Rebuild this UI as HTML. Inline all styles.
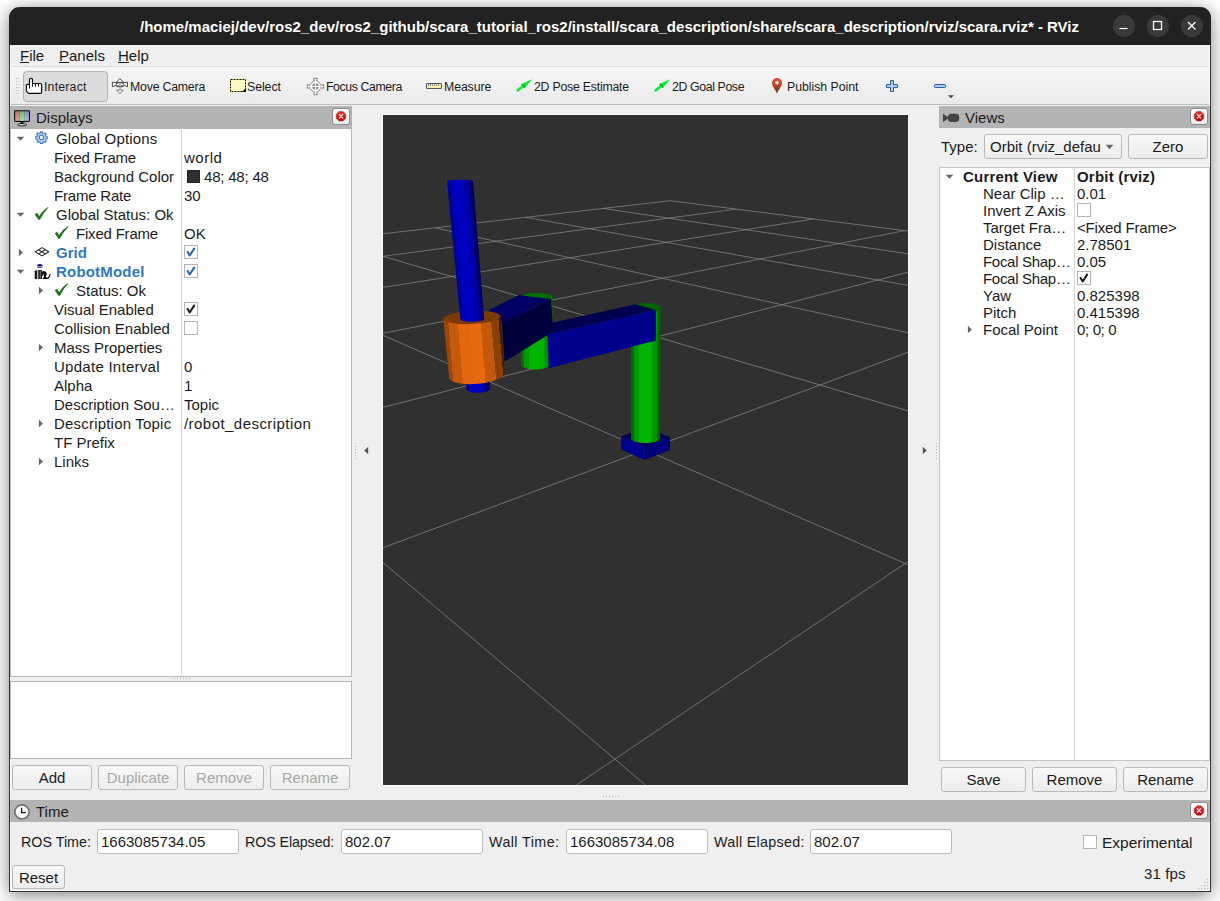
<!DOCTYPE html>
<html><head><meta charset="utf-8"><title>RViz</title>
<style>
html,body{margin:0;padding:0;}
body{width:1220px;height:901px;overflow:hidden;background:#ffffff;position:relative;font-family:"Liberation Sans",sans-serif;font-size:15px;color:#1b1b1b;}
.abs{position:absolute;}
#win{position:absolute;left:9px;top:7px;width:1200px;height:884px;border:1px solid #343434;border-top:none;border-radius:11px 11px 0 0;background:#efefef;box-shadow:0 3px 18px 0 rgba(0,0,0,.5);overflow:hidden;}
#page{position:absolute;left:0;top:0;width:1220px;height:901px;}
#titlebar{position:absolute;left:9px;top:7px;width:1202px;height:38px;background:#222222;border-radius:11px 11px 0 0;}
#title{position:absolute;left:-0.5px;top:7.5px;width:1220px;height:38px;line-height:38px;text-align:center;color:#fff;font-weight:bold;font-size:15px;white-space:pre;}
.wbtn{position:absolute;top:15px;width:21.6px;height:21.6px;border-radius:50%;background:#393939;}
.t{position:absolute;white-space:pre;line-height:19px;height:19px;}
.tb{position:absolute;white-space:pre;font-size:12.3px;line-height:20px;height:20px;top:77px;}
.b{font-weight:bold;}
.blue{color:#2f78c4;}
.hdr{position:absolute;height:22px;background:#b4b4b4;}
.btn{position:absolute;border:1px solid #b9b9b9;border-radius:3px;background:linear-gradient(#f8f8f8,#ececec);box-sizing:border-box;text-align:center;white-space:pre;}
.dis{color:#a8a8a8;}
.field{position:absolute;border:1px solid #bdbdbd;border-radius:3px;background:#fff;box-sizing:border-box;white-space:pre;}
.cb{position:absolute;width:14px;height:14px;box-sizing:border-box;border:1px solid #b5b5b5;background:#fff;}
.close{position:absolute;width:18px;height:17px;box-sizing:border-box;border:1px solid #8c8c8c;border-radius:3px;background:linear-gradient(#fff,#ececec);}
.v{position:absolute;white-space:pre;line-height:17px;height:17px;}
</style></head><body>
<div id="win"></div>
<div id="page">
<div id="titlebar"></div>
<div id="title">/home/maciej/dev/ros2_dev/ros2_github/scara_tutorial_ros2/install/scara_description/share/scara_description/rviz/scara.rviz* - RViz</div>
<div class="wbtn" style="left:1113.2px"></div><div class="wbtn" style="left:1147.2px"></div><div class="wbtn" style="left:1181.2px"></div>
<svg class="abs" style="left:1112.4px;top:14.2px" width="92" height="23" viewBox="0 0 92 23"><g stroke="#fff" stroke-width="1.3" fill="none"><path d="M7.5 14.5h8"/><rect x="41.5" y="7.5" width="8" height="8"/><path d="M76 8l7.5 7.5M83.5 8l-7.5 7.5"/></g></svg>

<!-- menubar -->
<div class="abs" style="left:10px;top:45px;width:1200px;height:21px;background:#efefef;border-bottom:1px solid #dcdcdc"></div>
<div class="t" style="left:20px;top:46px;font-size:15px"><u>F</u>ile</div>
<div class="t" style="left:59px;top:46px;font-size:15px"><u>P</u>anels</div>
<div class="t" style="left:118px;top:46px;font-size:15px"><u>H</u>elp</div>

<!-- toolbar -->
<div class="abs" style="left:10px;top:67px;width:1200px;height:37px;background:linear-gradient(#f5f5f5,#eaeaea);border-bottom:1px solid #bcbcbc"></div>
<svg class="abs" style="left:15px;top:77px" width="5" height="18"><rect x="1" y="1" width="1" height="1" fill="#bdbdbd"/><rect x="1" y="4" width="1" height="1" fill="#bdbdbd"/><rect x="1" y="7" width="1" height="1" fill="#bdbdbd"/><rect x="1" y="10" width="1" height="1" fill="#bdbdbd"/><rect x="1" y="13" width="1" height="1" fill="#bdbdbd"/><rect x="1" y="16" width="1" height="1" fill="#bdbdbd"/><rect x="3" y="1" width="1" height="1" fill="#bdbdbd"/><rect x="3" y="4" width="1" height="1" fill="#bdbdbd"/><rect x="3" y="7" width="1" height="1" fill="#bdbdbd"/><rect x="3" y="10" width="1" height="1" fill="#bdbdbd"/><rect x="3" y="13" width="1" height="1" fill="#bdbdbd"/><rect x="3" y="16" width="1" height="1" fill="#bdbdbd"/></svg>
<div class="abs" style="left:23px;top:71px;width:85px;height:31px;box-sizing:border-box;border:1px solid #b4b4b4;border-radius:4px;background:#dcdcdc"></div>
<div class="tb" style="left:44px;letter-spacing:0.2px">Interact</div>
<div class="tb" style="left:130px;letter-spacing:-0.2px">Move Camera</div>
<div class="tb" style="left:247px;letter-spacing:-0.05px">Select</div>
<div class="tb" style="left:326px;letter-spacing:-0.4px">Focus Camera</div>
<div class="tb" style="left:444px;letter-spacing:-0.1px">Measure</div>
<div class="tb" style="left:534px;letter-spacing:-0.22px">2D Pose Estimate</div>
<div class="tb" style="left:672px;letter-spacing:-0.37px">2D Goal Pose</div>
<div class="tb" style="left:787px;letter-spacing:-0.02px">Publish Point</div>
<svg class="abs" style="left:0;top:66px" width="1220" height="40" viewBox="0 66 1220 40">
<defs>
<linearGradient id="pin" x1="0" x2="0" y1="0" y2="1"><stop offset="0" stop-color="#ea4630"/><stop offset=".35" stop-color="#d64428"/><stop offset="1" stop-color="#5a3a06"/></linearGradient>
<linearGradient id="plusg" x1="0" x2="0" y1="0" y2="1"><stop offset="0" stop-color="#9dbbe2"/><stop offset="1" stop-color="#c3d6ee"/></linearGradient>
</defs>
<!-- hand -->
<path d="M26.4 85.6Q26.4 84.4 27.6 84.4H29.500V79.300Q29.500 78.300 31 78.300Q32.500 78.300 32.500 79.300V83.500H40.400Q41.600 83.500 41.600 84.800V92.200Q41.600 93.400 40.400 93.400H28.600L26.400 91.300Z" fill="#fff" stroke="#0a0a0a" stroke-width="1.15" stroke-linejoin="round"/>
<path d="M29.500 84.400V88.400M32.500 83.500V86.600M35.500 83.600V86.600M38.500 83.600V86.600" stroke="#0a0a0a" stroke-width="1" fill="none"/>
<!-- move camera -->
<g transform="translate(112,78)" stroke-linejoin="round" stroke-width="1">
<path d="M7.900 .700L11.800 4.400H4Z" fill="#fff" stroke="#4a4a4a"/>
<path d="M.400 4.100V8.800L3.200 7.500Q7.900 10.600 12.700 7.500L15.500 8.800V4.100L12 4.700H3.900Z" fill="#fff" stroke="#4a4a4a"/>
<rect x="7.100" y="4.600" width="1.600" height="8" fill="#b8b8b8"/>
<ellipse cx="7.900" cy="6.400" rx="4" ry="1.900" fill="none" stroke="#4a4a4a"/>
<path d="M4.500 12H11.300L7.900 15.700Z" fill="#fff" stroke="#7a7a7a"/>
</g>
<!-- select -->
<rect x="230.5" y="79.5" width="15" height="12" fill="#fdf7c3" stroke="#fffb8a" stroke-width="1.6"/>
<rect x="230.5" y="79.5" width="15" height="12" fill="none" stroke="#111" stroke-width="1" stroke-dasharray="2 1"/>
<path d="M246 88v4h-4z" fill="#000"/>
<!-- focus -->
<g transform="translate(315.5,86.5)" stroke="#777" stroke-width="1" fill="#fff">
<rect x="-1.5" y="-8.2" width="3" height="16.4"/><rect x="-8.2" y="-1.5" width="16.4" height="3"/>
<circle r="5.4"/>
<path d="M-1.5 -5.2V-1M1.5 -5.2V-1M-1.5 5.2V1M1.5 5.2V1M-5.2 -1.5H-1M-5.2 1.5H-1M5.2 -1.5H1M5.2 1.5H1" stroke="#fff" stroke-width="1.4"/>
<circle r="3.3" fill="#8a8a8a" stroke="none"/>
<path d="M0 -8V8M-8 0H8" stroke="#fff" stroke-width="1.1"/>
</g>
<!-- measure -->
<rect x="426.5" y="83.5" width="15" height="5" rx="1" fill="#f6eeb4" stroke="#555" stroke-width="1.1"/>
<path d="M428.5 84v2M430.5 84v2M432.5 84v2M434.5 84v2M436.5 84v2M438.5 84v2" stroke="#777" stroke-width=".8"/>
<!-- arrows -->
<g id="garrow" transform="translate(516.7,91.1) rotate(-38)">
<rect x="0" y="-1.3" width="9.2" height="2.6" fill="#00ee2c" rx="1"/>
<path d="M8.2 -2.6L19.4 0L8.2 2.6Z" fill="#00ee2c"/>
<path d="M8.2 -2.6q1.2 2.6 0 5.2" stroke="#00a022" stroke-width="1.2" fill="none"/>
</g>
<g transform="translate(654.7,91.1) rotate(-38)">
<rect x="0" y="-1.3" width="9.2" height="2.6" fill="#00ee2c" rx="1"/>
<path d="M8.2 -2.6L19.4 0L8.2 2.6Z" fill="#00ee2c"/>
<path d="M8.2 -2.6q1.2 2.6 0 5.2" stroke="#00a022" stroke-width="1.2" fill="none"/>
</g>
<!-- pin -->
<path d="M777 93.6 C775 88.6 772 86.2 772 83 a5 5 0 0 1 10 0 C782 86.2 779 88.6 777 93.6Z" fill="url(#pin)"/>
<circle cx="777" cy="82.7" r="1.8" fill="#fff"/>
<!-- plus minus -->
<path d="M890.5 80.5h3v4h4v3h-4v4h-3v-4h-4v-3h4z" fill="url(#plusg)" stroke="#2b5fa8" stroke-width="1" stroke-linejoin="round"/>
<rect x="934.5" y="84.5" width="11" height="3" rx=".8" fill="url(#plusg)" stroke="#2b5fa8" stroke-width="1"/>
<path d="M948 95.2h6l-3 3z" fill="#444"/>
</svg>


<div class="abs" style="left:10px;top:45px;width:1px;height:846px;background:#fbfbfb"></div><div class="abs" style="left:1209px;top:45px;width:1px;height:846px;background:#fbfbfb"></div><div class="abs" style="left:10px;top:890px;width:1200px;height:1px;background:#fbfbfb"></div>
<!-- displays panel -->
<div class="hdr" style="left:10px;top:106px;width:342px;height:22.6px"></div>
<div class="t" style="left:36px;top:108px">Displays</div>
<div class="abs" style="left:10px;top:128.6px;width:342px;height:548.4px;box-sizing:border-box;background:#fff;border:1px solid #b9b9b9;border-top:none"></div>
<div class="abs" style="left:181px;top:128px;width:1px;height:548px;background:#d6d6d6"></div>
<svg class="abs" style="left:16.4px;top:135.6px" width="9" height="6"><path d="M0.7 0.8h7.6l-3.8 4z" fill="#666"/></svg>
<svg class="abs" style="left:34px;top:130px" width="17" height="17" viewBox="0 0 17 17">
<g transform="translate(7.5,7.5) scale(.88)">
<g fill="#b9cdea" stroke="#3b78c8" stroke-width="1.15" stroke-linejoin="round">
<path d="M-1.1 -6.5h2.2l.3 1.6 1.2.5 1.4-.9 1.5 1.5-.9 1.4.5 1.2 1.6.3v2.2l-1.6.3-.5 1.2.9 1.4-1.5 1.5-1.4-.9-1.2.5-.3 1.6h-2.2l-.3-1.6-1.2-.5-1.4.9-1.5-1.5.9-1.4-.5-1.2-1.6-.3v-2.2l1.6-.3.5-1.2-.9-1.4 1.5-1.5 1.4.9 1.2-.5z"/>
<circle r="2.6" fill="#dbe6f5"/>
</g><circle r="1.2" fill="#fff"/></g>
</svg>
<div class="t" style="left:56px;top:129px;letter-spacing:0.15px">Global Options</div>

<div class="t" style="left:54px;top:148px;letter-spacing:-0.2px">Fixed Frame</div>
<div class="t" style="left:184px;top:148px;letter-spacing:0.5px">world</div>

<div class="t" style="left:54px;top:167px">Background Color</div>
<div class="abs" style="left:187px;top:170px;width:13px;height:13px;background:#303030;box-sizing:border-box;border:1px solid #222"></div>
<div class="t" style="left:204px;top:167px;letter-spacing:-.2px">48; 48; 48</div>

<div class="t" style="left:54px;top:186px;letter-spacing:-0.2px">Frame Rate</div>
<div class="t" style="left:184px;top:186px">30</div>
<svg class="abs" style="left:16.4px;top:211.6px" width="9" height="6"><path d="M0.7 0.8h7.6l-3.8 4z" fill="#666"/></svg>
<svg class="abs" style="left:34px;top:206.4px" width="15.6" height="15" viewBox="0 0 17 16" preserveAspectRatio="none"><path d="M0.8 8.8L3.200 7.200L5.600 10.600Q9 4.800 15.200 1L15.700 1.700Q10.400 7.200 6.400 14.600L4.800 14.600Z" fill="#1d741d"/></svg>
<div class="t" style="left:56px;top:205px">Global Status: Ok</div>

<svg class="abs" style="left:54px;top:225.4px" width="15.6" height="15" viewBox="0 0 17 16" preserveAspectRatio="none"><path d="M0.8 8.8L3.200 7.200L5.600 10.600Q9 4.800 15.200 1L15.700 1.700Q10.400 7.200 6.400 14.600L4.800 14.600Z" fill="#1d741d"/></svg>
<div class="t" style="left:76px;top:224px;letter-spacing:-0.2px">Fixed Frame</div>
<div class="t" style="left:184px;top:224px">OK</div>
<svg class="abs" style="left:18px;top:248px" width="6" height="9"><path d="M0.9 0.7v7.6l4-3.8z" fill="#666"/></svg>
<svg class="abs" style="left:34px;top:244px" width="17" height="17" viewBox="0 0 17 17">
<g fill="none" stroke="#2a2a2a" stroke-width="1.1" stroke-linejoin="round">
<path d="M1.200 7.800L8 3.600L14.800 7.800L8 11.900Z"/><path d="M4.600 5.700L11.400 9.850M11.400 5.700L4.600 9.850"/>
</g>
</svg>
<div class="t b blue" style="left:56px;top:243px">Grid</div>
<div class="cb" style="left:184px;top:245px"></div><svg class="abs" style="left:184px;top:245px" width="14" height="14" viewBox="0 0 14 14"><path d="M3.200 6.200L5.700 10.500L10.600 2.900" fill="none" stroke="#2466b4" stroke-width="2" stroke-linejoin="round"/></svg>
<svg class="abs" style="left:16.4px;top:268.6px" width="9" height="6"><path d="M0.7 0.8h7.6l-3.8 4z" fill="#666"/></svg>
<svg class="abs" style="left:34px;top:263px" width="17" height="17" viewBox="0 0 17 17">
<g>
<ellipse cx="5.800" cy="3.100" rx="2.900" ry="2" fill="#10108c"/>
<path d="M3 2.800q2.800 1.200 5.700 0v1q-2.900 1.100-5.700 0z" fill="#eadba6"/>
<path d="M.8 8.300q.6-1.300 2.100-.8v8.400q-1.100.6-2.200-.2z" fill="#0c0c0c"/>
<path d="M3.700 7h4.200v1.300l1.500.6v3.300l-1.400 1v2.700H3.700z" fill="#1c1c1c"/>
<path d="M4.800 7.600v8M6.500 8v7.500" stroke="#9a9a9a" stroke-width=".6"/>
<path d="M8.700 8.300q3.600-.9 4.100 2.500q.2 1.600-1.100 2.700q.5 1.300 2 1.100q1.300-.6 2-3.900l1 .3q-.8 4.600-3.200 5.100h-5.200q2.300-1.700 1.500-4.500q-.4-1.700-1.600-1.400z" fill="#0c0c0c"/>
</g>
</svg>
<div class="t b blue" style="left:56px;top:262px;letter-spacing:0.2px">RobotModel</div>
<div class="cb" style="left:184px;top:264px"></div><svg class="abs" style="left:184px;top:264px" width="14" height="14" viewBox="0 0 14 14"><path d="M3.200 6.200L5.700 10.500L10.600 2.900" fill="none" stroke="#2466b4" stroke-width="2" stroke-linejoin="round"/></svg>
<svg class="abs" style="left:38px;top:286px" width="6" height="9"><path d="M0.9 0.7v7.6l4-3.8z" fill="#666"/></svg>
<svg class="abs" style="left:54px;top:282.4px" width="15.6" height="15" viewBox="0 0 17 16" preserveAspectRatio="none"><path d="M0.8 8.8L3.200 7.200L5.600 10.600Q9 4.800 15.200 1L15.700 1.700Q10.400 7.200 6.400 14.600L4.800 14.600Z" fill="#1d741d"/></svg>
<div class="t" style="left:76px;top:281px">Status: Ok</div>

<div class="t" style="left:54px;top:300px">Visual Enabled</div>
<div class="cb" style="left:184px;top:302px"></div><svg class="abs" style="left:184px;top:302px" width="14" height="14" viewBox="0 0 14 14"><path d="M3.200 6.200L5.700 10.500L10.600 2.900" fill="none" stroke="#1a1a1a" stroke-width="2" stroke-linejoin="round"/></svg>

<div class="t" style="left:54px;top:319px">Collision Enabled</div>
<div class="cb" style="left:184px;top:321px"></div>
<svg class="abs" style="left:38px;top:343px" width="6" height="9"><path d="M0.9 0.7v7.6l4-3.8z" fill="#666"/></svg>
<div class="t" style="left:54px;top:338px">Mass Properties</div>

<div class="t" style="left:54px;top:357px;letter-spacing:0.27px">Update Interval</div>
<div class="t" style="left:184px;top:357px">0</div>

<div class="t" style="left:54px;top:376px">Alpha</div>
<div class="t" style="left:184px;top:376px">1</div>

<div class="t" style="left:54px;top:395px">Description Sou…</div>
<div class="t" style="left:184px;top:395px">Topic</div>
<svg class="abs" style="left:38px;top:419px" width="6" height="9"><path d="M0.9 0.7v7.6l4-3.8z" fill="#666"/></svg>
<div class="t" style="left:54px;top:414px;letter-spacing:0.2px">Description Topic</div>
<div class="t" style="left:184px;top:414px;letter-spacing:0.45px">/robot_description</div>

<div class="t" style="left:54px;top:433px">TF Prefix</div>
<svg class="abs" style="left:38px;top:457px" width="6" height="9"><path d="M0.9 0.7v7.6l4-3.8z" fill="#666"/></svg>
<div class="t" style="left:54px;top:452px">Links</div>
<div class="abs" style="left:174px;top:678px;width:17px;height:1px;background-image:linear-gradient(90deg,#b0b0b0 1px,transparent 1px);background-size:3px 1px"></div>
<div class="abs" style="left:10px;top:681px;width:342px;height:78px;box-sizing:border-box;background:#fff;border:1px solid #b9b9b9"></div>
<div class="btn" style="left:12px;top:765px;width:80px;height:25px;line-height:23px">Add</div>
<div class="btn dis" style="left:98px;top:765px;width:80px;height:25px;line-height:23px">Duplicate</div>
<div class="btn dis" style="left:184px;top:765px;width:80px;height:25px;line-height:23px">Remove</div>
<div class="btn dis" style="left:270px;top:765px;width:80px;height:25px;line-height:23px">Rename</div>
<div class="close" style="left:332px;top:108px"></div>

<!-- viewport -->
<div class="abs" style="left:382px;top:114px;width:527px;height:672px;background:#fdfdfd"></div>
<svg class="abs" style="left:383px;top:115px" width="525" height="670" viewBox="0 0 525 670">
<rect width="525" height="670" fill="#303030"/>
<g stroke="#888" stroke-width="0.85" fill="none" stroke-opacity=".85">
<path d="M287.2 85.7L545.0 118.6"/>
<path d="M287.2 85.7L-20.0 121.1"/>
<path d="M220.1 93.4L545.0 141.8"/>
<path d="M353.1 94.1L-20.0 144.0"/>
<path d="M142.6 102.3L545.0 174.0"/>
<path d="M430.2 104.0L-20.0 175.6"/>
<path d="M52.1 112.8L545.0 222.2"/>
<path d="M521.7 115.6L-20.0 222.2"/>
<path d="M-20.0 135.4L545.0 301.8"/>
<path d="M545.0 152.1L-20.0 297.5"/>
<path d="M-20.0 211.5L545.0 458.5"/>
<path d="M545.0 229.8L-20.0 440.2"/>
<path d="M-20.0 430.6L286.0 690.0"/>
<path d="M545.0 433.1L163.7 690.0"/>
</g>
<defs>
<linearGradient id="gpost" x1="0" x2="1" y1="0" y2="0">
<stop offset="0" stop-color="#006e00"/><stop offset=".1" stop-color="#006e00"/><stop offset=".1" stop-color="#009600"/><stop offset=".28" stop-color="#009600"/><stop offset=".28" stop-color="#00b400"/><stop offset=".7" stop-color="#00b400"/><stop offset=".7" stop-color="#009600"/><stop offset=".88" stop-color="#009600"/><stop offset=".88" stop-color="#006e00"/><stop offset="1" stop-color="#006400"/>
</linearGradient>
<linearGradient id="gjoint" x1="0" x2="1" y1="0" y2="0">
<stop offset="0" stop-color="#007800"/><stop offset=".08" stop-color="#007800"/><stop offset=".08" stop-color="#009a00"/><stop offset=".25" stop-color="#009a00"/><stop offset=".25" stop-color="#00b400"/><stop offset=".72" stop-color="#00b400"/><stop offset=".72" stop-color="#009600"/><stop offset=".9" stop-color="#009600"/><stop offset=".9" stop-color="#006400"/><stop offset="1" stop-color="#005a00"/>
</linearGradient>
<linearGradient id="grod" gradientUnits="userSpaceOnUse" x1="447" y1="181.5" x2="472.8" y2="179.2">
<stop offset="0" stop-color="#000096"/><stop offset=".1" stop-color="#000096"/><stop offset=".1" stop-color="#0000b0"/><stop offset=".25" stop-color="#0000b0"/><stop offset=".25" stop-color="#0000c0"/><stop offset=".62" stop-color="#0000c0"/><stop offset=".62" stop-color="#0000a8"/><stop offset=".8" stop-color="#0000a8"/><stop offset=".8" stop-color="#000078"/><stop offset=".93" stop-color="#000078"/><stop offset=".93" stop-color="#000050"/><stop offset="1" stop-color="#000050"/>
</linearGradient>
<linearGradient id="gor" gradientUnits="userSpaceOnUse" x1="443.3" y1="318.5" x2="500.6" y2="313.7">
<stop offset="0" stop-color="#9a480a"/><stop offset=".08" stop-color="#9a480a"/><stop offset=".08" stop-color="#c65a0c"/><stop offset=".245" stop-color="#c65a0c"/><stop offset=".245" stop-color="#e36710"/><stop offset=".44" stop-color="#e36710"/><stop offset=".44" stop-color="#e8690f"/><stop offset=".64" stop-color="#e8690f"/><stop offset=".64" stop-color="#c4580c"/><stop offset=".825" stop-color="#c4580c"/><stop offset=".825" stop-color="#8a3e08"/><stop offset=".955" stop-color="#8a3e08"/><stop offset=".955" stop-color="#4a2104"/><stop offset="1" stop-color="#3a1a03"/>
</linearGradient>
<linearGradient id="grod2" gradientUnits="userSpaceOnUse" x1="466" y1="385" x2="490" y2="383.5">
<stop offset="0" stop-color="#000096"/><stop offset=".1" stop-color="#000096"/><stop offset=".1" stop-color="#0000b0"/><stop offset=".25" stop-color="#0000b0"/><stop offset=".25" stop-color="#0000c0"/><stop offset=".62" stop-color="#0000c0"/><stop offset=".62" stop-color="#0000a8"/><stop offset=".8" stop-color="#0000a8"/><stop offset=".8" stop-color="#000078"/><stop offset=".93" stop-color="#000078"/><stop offset=".93" stop-color="#000050"/><stop offset="1" stop-color="#000050"/>
</linearGradient>
</defs>
<g transform="translate(-383,-115)" shape-rendering="geometricPrecision">
<!-- base box -->
<polygon points="621,436.5 646.5,427.5 670,437.2 644.5,446" fill="#000050"/>
<polygon points="621,436.5 644.5,446 644.5,460 621,449.5" fill="#00008c"/>
<polygon points="644.5,446 670,437.2 670,450 644.5,460" fill="#000078"/>
<!-- post -->
<path d="M631 308 L631 438.5 A14.5 4.5 0 0 0 660 438.5 L660.6 308 Z" fill="url(#gpost)"/>
<ellipse cx="645.8" cy="308" rx="14.8" ry="5" fill="#006400"/>
<!-- joint cylinder -->
<path d="M521 297 L521.4 365 A13.8 4.6 0 0 0 549 365 L552.6 365 L552.6 297 Z" fill="url(#gjoint)"/>
<ellipse cx="536.8" cy="297.4" rx="15.8" ry="4.6" fill="#006e00"/>
<!-- arm 1 -->
<polygon points="553.3,322.4 635.2,304.2 655.9,310 547.3,334.4" fill="#00004e"/>
<polygon points="547.3,334.4 655.9,310 655.9,340.6 548.7,368.2" fill="#00008c"/>
<!-- arm 2 -->
<polygon points="488.6,310 518.6,295.3 550.9,298.9 502,323.3" fill="#000064"/>
<polygon points="502,323.3 550.9,298.9 553.2,331.7 504.6,361.5" fill="#00003c"/>
<!-- rod lower -->
<path d="M466 375 L466.3 389.5 A11.9 3.8 0 0 0 490 389 L490 375 Z" fill="url(#grod2)"/>
<!-- orange cylinder -->
<path d="M443.3 318.5 L449.3 378.5 A27.9 8.8 -5 0 0 504.6 373.2 L500.6 316 Z" fill="url(#gor)"/>
<ellipse cx="472" cy="317.5" rx="28.7" ry="6.6" transform="rotate(-2.5 472 317.5)" fill="#7e3a06"/>
<!-- rod upper -->
<path d="M447 181.5 A13 1.6 0 0 1 473 181 L484.2 319 A12 2.6 0 0 1 460.4 319.6 Z" fill="url(#grod)"/>
</g>

</svg>
<svg class="abs" style="left:363px;top:445.5px" width="6" height="9"><path d="M5.2 0.8v7.4l-4-3.7z" fill="#555"/></svg>
<svg class="abs" style="left:922.2px;top:445.5px" width="6" height="9"><path d="M0.8 0.8v7.4l4-3.7z" fill="#555"/></svg>
<div class="abs" style="left:603px;top:796px;width:17px;height:1px;background-image:linear-gradient(90deg,#b0b0b0 1px,transparent 1px);background-size:3px 1px"></div>
<svg class="abs" style="left:355px;top:443px" width="1" height="17"><rect x="0" y="0" width="1" height="1" fill="#b4b4b4"/><rect x="0" y="3" width="1" height="1" fill="#b4b4b4"/><rect x="0" y="6" width="1" height="1" fill="#b4b4b4"/><rect x="0" y="9" width="1" height="1" fill="#b4b4b4"/><rect x="0" y="12" width="1" height="1" fill="#b4b4b4"/><rect x="0" y="15" width="1" height="1" fill="#b4b4b4"/></svg>
<svg class="abs" style="left:936px;top:443px" width="1" height="17"><rect x="0" y="0" width="1" height="1" fill="#b4b4b4"/><rect x="0" y="3" width="1" height="1" fill="#b4b4b4"/><rect x="0" y="6" width="1" height="1" fill="#b4b4b4"/><rect x="0" y="9" width="1" height="1" fill="#b4b4b4"/><rect x="0" y="12" width="1" height="1" fill="#b4b4b4"/><rect x="0" y="15" width="1" height="1" fill="#b4b4b4"/></svg>

<!-- views panel -->
<div class="hdr" style="left:939px;top:106px;width:271px;height:22px"></div>
<div class="t" style="left:965px;top:108px">Views</div>
<div class="t" style="left:941px;top:137px">Type:</div>
<div class="btn" style="left:984px;top:134px;width:138px;height:25px;line-height:23px;text-align:left;overflow:hidden"><span style="position:absolute;left:5px;top:0;width:111px;overflow:hidden;display:block">Orbit (rviz_default_plugins)</span></div>
<svg class="abs" style="left:1105px;top:144px" width="9" height="6"><path d="M0.5 0.8h8l-4 4.4z" fill="#6a6a6a"/></svg>
<div class="btn" style="left:1128px;top:134px;width:80px;height:25px;line-height:23px">Zero</div>
<div class="abs" style="left:939px;top:167px;width:271px;height:594px;box-sizing:border-box;background:#fff;border:1px solid #c4c4c4"></div>
<div class="abs" style="left:1074px;top:168px;width:1px;height:592px;background:#d6d6d6"></div>
<svg class="abs" style="left:945.4px;top:173.6px" width="9" height="6"><path d="M0.7 0.8h7.6l-3.8 4z" fill="#666"/></svg>
<div class="v b" style="left:963px;top:168px;letter-spacing:0.2px">Current View</div>
<div class="v b" style="left:1077px;top:168px;letter-spacing:0.2px">Orbit (rviz)</div>

<div class="v" style="left:983px;top:185px">Near Clip …</div>
<div class="v" style="left:1077px;top:185px">0.01</div>

<div class="v" style="left:983px;top:202px">Invert Z Axis</div>
<div class="cb" style="left:1077px;top:203px"></div>

<div class="v" style="left:983px;top:219px">Target Fra…</div>
<div class="v" style="left:1077px;top:219px;letter-spacing:-0.17px">&lt;Fixed Frame&gt;</div>

<div class="v" style="left:983px;top:236px">Distance</div>
<div class="v" style="left:1077px;top:236px">2.78501</div>

<div class="v" style="left:983px;top:253px;letter-spacing:-0.3px">Focal Shap…</div>
<div class="v" style="left:1077px;top:253px">0.05</div>

<div class="v" style="left:983px;top:270px;letter-spacing:-0.3px">Focal Shap…</div>
<div class="cb" style="left:1077px;top:271px"></div><svg class="abs" style="left:1077px;top:271px" width="14" height="14" viewBox="0 0 14 14"><path d="M3.200 6.200L5.700 10.500L10.600 2.900" fill="none" stroke="#1a1a1a" stroke-width="2" stroke-linejoin="round"/></svg>

<div class="v" style="left:983px;top:287px">Yaw</div>
<div class="v" style="left:1077px;top:287px">0.825398</div>

<div class="v" style="left:983px;top:304px">Pitch</div>
<div class="v" style="left:1077px;top:304px">0.415398</div>
<svg class="abs" style="left:967px;top:325px" width="6" height="9"><path d="M0.9 0.7v7.6l4-3.8z" fill="#666"/></svg>
<div class="v" style="left:983px;top:321px">Focal Point</div>
<div class="v" style="left:1077px;top:321px;letter-spacing:-0.35px">0; 0; 0</div>
<div class="btn" style="left:941px;top:767px;width:85px;height:25px;line-height:23px">Save</div>
<div class="btn" style="left:1032px;top:767px;width:85px;height:25px;line-height:23px">Remove</div>
<div class="btn" style="left:1123px;top:767px;width:85px;height:25px;line-height:23px">Rename</div>
<div class="close" style="left:1190px;top:108px"></div>

<!-- time panel -->
<div class="hdr" style="left:10px;top:800px;width:1200px;height:21.5px"></div>
<div class="t" style="left:36px;top:801.5px">Time</div>
<div class="t" style="left:21px;top:833px;font-size:14.3px;letter-spacing:0px">ROS Time:</div>
<div class="t" style="left:245px;top:833px;font-size:14.3px;letter-spacing:-0.12px">ROS Elapsed:</div>
<div class="t" style="left:489px;top:833px;font-size:14.3px;letter-spacing:0.42px">Wall Time:</div>
<div class="t" style="left:714px;top:833px;font-size:14.3px;letter-spacing:0.3px">Wall Elapsed:</div>
<div class="field" style="left:97px;top:829px;width:142px;height:25px;line-height:23px;padding-left:3px">1663085734.05</div>
<div class="field" style="left:341px;top:829px;width:142px;height:25px;line-height:23px;padding-left:3px">802.07</div>
<div class="field" style="left:566px;top:829px;width:142px;height:25px;line-height:23px;padding-left:3px">1663085734.08</div>
<div class="field" style="left:810px;top:829px;width:142px;height:25px;line-height:23px;padding-left:3px">802.07</div>
<div class="btn" style="left:12px;top:865px;width:53px;height:24px;line-height:24px">Reset</div>
<div class="cb" style="left:1083px;top:835px"></div>
<div class="t" style="left:1102px;top:833px;font-size:15.5px">Experimental</div>
<div class="t" style="left:1144px;top:863.5px;letter-spacing:.15px">31 fps</div>
<div class="close" style="left:1190px;top:802.200px"></div>
<svg class="abs" style="left:1197px;top:878px" width="13" height="13"><g fill="#bdbdbd"><rect x="10" y="1" width="1.2" height="1.2"/><rect x="7" y="4" width="1.2" height="1.2"/><rect x="10" y="4" width="1.2" height="1.2"/><rect x="4" y="7" width="1.2" height="1.2"/><rect x="7" y="7" width="1.2" height="1.2"/><rect x="10" y="7" width="1.2" height="1.2"/><rect x="1" y="10" width="1.2" height="1.2"/><rect x="4" y="10" width="1.2" height="1.2"/><rect x="7" y="10" width="1.2" height="1.2"/><rect x="10" y="10" width="1.2" height="1.2"/></g></svg>
<svg class="abs" style="left:0;top:0" width="1220" height="901" viewBox="0 0 1220 901" pointer-events="none">
<defs><linearGradient id="scr" x1="0" x2="0" y1="0" y2="1"><stop offset="0" stop-color="#000" stop-opacity=".18"/><stop offset="1" stop-color="#fff" stop-opacity=".12"/></linearGradient>
<linearGradient id="redg" x1="0" x2="0" y1="0" y2="1"><stop offset="0" stop-color="#e03030"/><stop offset="1" stop-color="#c00000"/></linearGradient>
</defs>
<!-- monitor -->
<rect x="14.100" y="110.200" width="15.800" height="11.800" rx="1.400" fill="#0a0a0a"/>
<rect x="15.200" y="111.300" width="4.100" height="9.600" fill="#e88888"/><rect x="19.300" y="111.300" width="5.500" height="9.600" fill="#88dc88"/><rect x="24.800" y="111.300" width="4" height="9.600" fill="#a8a8f4"/>
<rect x="15.200" y="111.300" width="13.600" height="9.600" fill="url(#scr)"/>
<path d="M20.800 121.900h2.400l.8 2h-4z" fill="#111"/>
<ellipse cx="22" cy="124.800" rx="4.700" ry="1.100" fill="#f4f4f4" stroke="#111" stroke-width=".9"/>
<!-- camera -->
<path d="M943 113.800L948.200 117.300V118.500L943 122Z" fill="#454545"/>
<rect x="948" y="113.800" width="11.200" height="8.200" rx="3.200" fill="#454545"/>
<!-- clock -->
<circle cx="22" cy="811.900" r="7.100" fill="#fff" stroke="#727272" stroke-width="1.700"/>
<path d="M21.600 807.800V812.600H25.800" fill="none" stroke="#111" stroke-width="1.300"/>
<g transform="translate(341,116.200)"><path d="M-2 -4.700h4l2.700 2.700v4l-2.700 2.700h-4l-2.700-2.700v-4z" fill="url(#redg)" stroke="#c41818" stroke-width=".5"/><path d="M-1.700 -1.700L1.700 1.700M1.700 -1.700L-1.700 1.700" stroke="#f4dede" stroke-width="1.400" stroke-linecap="round"/></g><g transform="translate(1199,116.200)"><path d="M-2 -4.700h4l2.700 2.700v4l-2.700 2.700h-4l-2.700-2.700v-4z" fill="url(#redg)" stroke="#c41818" stroke-width=".5"/><path d="M-1.700 -1.700L1.700 1.700M1.700 -1.700L-1.700 1.700" stroke="#f4dede" stroke-width="1.400" stroke-linecap="round"/></g><g transform="translate(1199,810.500)"><path d="M-2 -4.700h4l2.700 2.700v4l-2.700 2.700h-4l-2.700-2.700v-4z" fill="url(#redg)" stroke="#c41818" stroke-width=".5"/><path d="M-1.700 -1.700L1.700 1.700M1.700 -1.700L-1.700 1.700" stroke="#f4dede" stroke-width="1.400" stroke-linecap="round"/></g>
</svg>
</div>
</body></html>
